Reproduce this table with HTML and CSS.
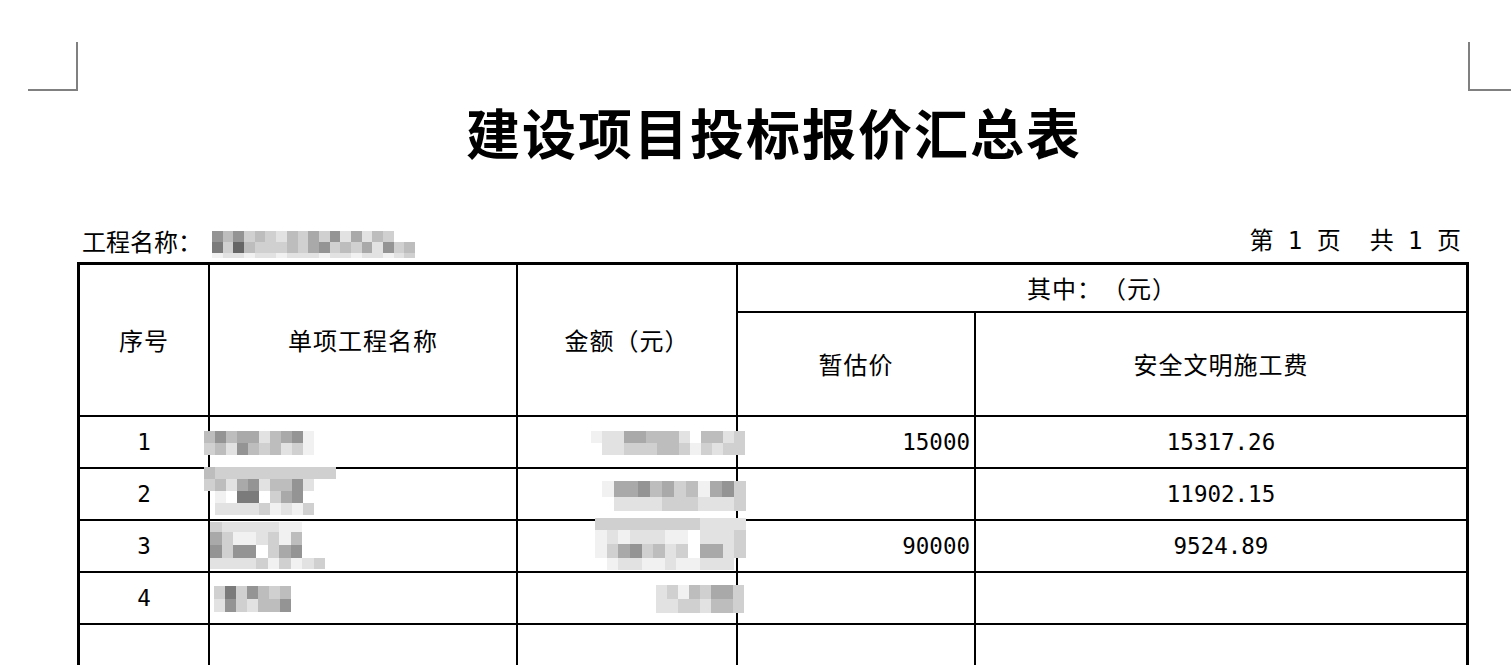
FILE: index.html
```html
<!DOCTYPE html>
<html lang="zh-CN">
<head>
<meta charset="utf-8">
<title>建设项目投标报价汇总表</title>
<link rel="stylesheet" href="styles.css">
</head>
<body>
<div class="page">
  <div class="marks">
    <div class="mark mark-l"></div>
    <div class="mark mark-r"></div>
  </div>
  <div class="doc">
    <h1 class="title">建设项目投标报价汇总表</h1>
    <div class="info">
      <div class="proj"><span class="lbl">工程名称：</span><span class="blur b-proj"><i class="k6"></i><i class="k4"></i><i class="k6"></i><i class="k3"></i><i class="k4"></i><i class="k3"></i><i class="k2"></i><i class="k4"></i><i class="k3"></i><i class="k5"></i><i class="k3"></i><i class="k6"></i><i class="k2"></i><i class="k5"></i><i class="k2"></i><i class="k4"></i><i class="k3"></i><i class="k0"></i><i class="k0"></i><i class="k7"></i><i class="k3"></i><i class="k8"></i><i class="k4"></i><i class="k3"></i><i class="k3"></i><i class="k3"></i><i class="k4"></i><i class="k3"></i><i class="k5"></i><i class="k6"></i><i class="k3"></i><i class="k4"></i><i class="k3"></i><i class="k5"></i><i class="k2"></i><i class="k6"></i><i class="k3"></i><i class="k4"></i><i class="k1"></i><i class="k2"></i><i class="k2"></i><i class="k1"></i><i class="k2"></i><i class="k2"></i><i class="k1"></i><i class="k2"></i><i class="k2"></i><i class="k2"></i><i class="k1"></i><i class="k2"></i><i class="k2"></i><i class="k1"></i><i class="k2"></i><i class="k2"></i><i class="k1"></i><i class="k2"></i><i class="k3"></i></span></div>
      <div class="pages">第 1 页  共 1 页</div>
    </div>
    <table class="sheet">
      <colgroup>
        <col class="c1"><col class="c2"><col class="c3"><col class="c4"><col class="c5">
      </colgroup>
      <tr class="hr1">
        <th rowspan="2">序号</th>
        <th rowspan="2">单项工程名称</th>
        <th rowspan="2">金额（元）</th>
        <th colspan="2" class="last">其中：（元）</th>
      </tr>
      <tr class="hr2">
        <th>暂估价</th>
        <th class="last">安全文明施工费</th>
      </tr>
      <tr class="dr">
        <td class="no">1</td>
        <td class="name"><span class="blur b-n1"><i class="k4"></i><i class="k6"></i><i class="k4"></i><i class="k5"></i><i class="k5"></i><i class="k2"></i><i class="k4"></i><i class="k5"></i><i class="k6"></i><i class="k1"></i><i class="k3"></i><i class="k4"></i><i class="k2"></i><i class="k6"></i><i class="k4"></i><i class="k3"></i><i class="k4"></i><i class="k2"></i><i class="k3"></i><i class="k1"></i></span></td>
        <td class="amt"><span class="blur b-a1"><i class="k1"></i><i class="k2"></i><i class="k2"></i><i class="k5"></i><i class="k5"></i><i class="k4"></i><i class="k4"></i><i class="k4"></i><i class="k2"></i><i class="k0"></i><i class="k4"></i><i class="k4"></i><i class="k2"></i><i class="k3"></i><i class="k0"></i><i class="k2"></i><i class="k2"></i><i class="k3"></i><i class="k3"></i><i class="k3"></i><i class="k4"></i><i class="k4"></i><i class="k3"></i><i class="k1"></i><i class="k3"></i><i class="k2"></i><i class="k3"></i><i class="k3"></i></span></td>
        <td class="est">15000</td>
        <td class="fee last">15317.26</td>
      </tr>
      <tr class="dr">
        <td class="no">2</td>
        <td class="name"><span class="blur b-n2"><i class="k4"></i><i class="k3"></i><i class="k3"></i><i class="k3"></i><i class="k3"></i><i class="k3"></i><i class="k3"></i><i class="k3"></i><i class="k3"></i><i class="k3"></i><i class="k3"></i><i class="k3"></i><i class="k3"></i><i class="k4"></i><i class="k2"></i><i class="k5"></i><i class="k6"></i><i class="k2"></i><i class="k4"></i><i class="k4"></i><i class="k6"></i><i class="k2"></i><i class="k0"></i><i class="k0"></i><i class="k0"></i><i class="k1"></i><i class="k0"></i><i class="k7"></i><i class="k7"></i><i class="k0"></i><i class="k3"></i><i class="k5"></i><i class="k6"></i><i class="k0"></i><i class="k0"></i><i class="k0"></i><i class="k0"></i><i class="k2"></i><i class="k2"></i><i class="k2"></i><i class="k2"></i><i class="k3"></i><i class="k1"></i><i class="k2"></i><i class="k1"></i><i class="k3"></i><i class="k0"></i><i class="k0"></i></span></td>
        <td class="amt"><span class="blur b-a2"><i class="k1"></i><i class="k5"></i><i class="k5"></i><i class="k6"></i><i class="k4"></i><i class="k5"></i><i class="k3"></i><i class="k4"></i><i class="k1"></i><i class="k5"></i><i class="k6"></i><i class="k3"></i><i class="k0"></i><i class="k2"></i><i class="k2"></i><i class="k2"></i><i class="k2"></i><i class="k3"></i><i class="k3"></i><i class="k3"></i><i class="k2"></i><i class="k2"></i><i class="k2"></i><i class="k3"></i></span></td>
        <td class="est"></td>
        <td class="fee last">11902.15</td>
      </tr>
      <tr class="dr">
        <td class="no">3</td>
        <td class="name"><span class="blur b-n3"><i class="k3"></i><i class="k2"></i><i class="k2"></i><i class="k2"></i><i class="k2"></i><i class="k2"></i><i class="k1"></i><i class="k1"></i><i class="k0"></i><i class="k0"></i><i class="k5"></i><i class="k3"></i><i class="k1"></i><i class="k1"></i><i class="k2"></i><i class="k3"></i><i class="k1"></i><i class="k4"></i><i class="k0"></i><i class="k0"></i><i class="k6"></i><i class="k3"></i><i class="k6"></i><i class="k6"></i><i class="k0"></i><i class="k3"></i><i class="k5"></i><i class="k6"></i><i class="k0"></i><i class="k0"></i><i class="k2"></i><i class="k2"></i><i class="k2"></i><i class="k2"></i><i class="k3"></i><i class="k1"></i><i class="k3"></i><i class="k1"></i><i class="k2"></i><i class="k3"></i></span></td>
        <td class="amt"><span class="blur b-a3"><i class="k3"></i><i class="k3"></i><i class="k3"></i><i class="k3"></i><i class="k3"></i><i class="k3"></i><i class="k3"></i><i class="k3"></i><i class="k3"></i><i class="k2"></i><i class="k2"></i><i class="k2"></i><i class="k2"></i><i class="k1"></i><i class="k2"></i><i class="k1"></i><i class="k2"></i><i class="k2"></i><i class="k2"></i><i class="k1"></i><i class="k1"></i><i class="k0"></i><i class="k2"></i><i class="k2"></i><i class="k2"></i><i class="k3"></i><i class="k1"></i><i class="k3"></i><i class="k5"></i><i class="k6"></i><i class="k3"></i><i class="k4"></i><i class="k2"></i><i class="k3"></i><i class="k0"></i><i class="k5"></i><i class="k5"></i><i class="k2"></i><i class="k3"></i><i class="k0"></i><i class="k1"></i><i class="k2"></i><i class="k2"></i><i class="k1"></i><i class="k1"></i><i class="k2"></i><i class="k1"></i><i class="k1"></i><i class="k2"></i><i class="k2"></i><i class="k2"></i><i class="k0"></i></span></td>
        <td class="est">90000</td>
        <td class="fee last">9524.89</td>
      </tr>
      <tr class="dr">
        <td class="no">4</td>
        <td class="name"><span class="blur b-n4"><i class="k3"></i><i class="k7"></i><i class="k3"></i><i class="k6"></i><i class="k4"></i><i class="k3"></i><i class="k4"></i><i class="k2"></i><i class="k6"></i><i class="k3"></i><i class="k2"></i><i class="k4"></i><i class="k4"></i><i class="k6"></i></span></td>
        <td class="amt"><span class="blur b-a4"><i class="k0"></i><i class="k2"></i><i class="k3"></i><i class="k1"></i><i class="k4"></i><i class="k3"></i><i class="k5"></i><i class="k5"></i><i class="k3"></i><i class="k0"></i><i class="k2"></i><i class="k2"></i><i class="k3"></i><i class="k3"></i><i class="k2"></i><i class="k4"></i><i class="k4"></i><i class="k3"></i></span></td>
        <td class="est"></td>
        <td class="fee last"></td>
      </tr>
      <tr class="dr">
        <td class="no"></td>
        <td class="name"></td>
        <td class="amt"></td>
        <td class="est"></td>
        <td class="fee last"></td>
      </tr>
    </table>
  </div>
</div>
</body>
</html>
```

FILE: styles.css
```css
html, body {
  margin: 0;
  padding: 0;
  background: #ffffff;
}

body {
  font-family: "DejaVu Sans Mono", "Noto Sans CJK SC", monospace;
  color: #000;
  overflow: hidden;
  text-spacing-trim: space-all;
}

.page {
  padding-top: 42px;
}

.marks {
  display: flex;
  justify-content: space-between;
  padding-left: 28px;
}

.mark {
  height: 47px;
  border-bottom: 2px solid #808080;
}

.mark-l {
  width: 48px;
  border-right: 2px solid #808080;
}

.mark-r {
  width: 41px;
  border-left: 2px solid #808080;
}

.doc {
  width: 1392px;
  margin-left: 77px;
}

.title {
  margin: 9px 0 0 0;
  font-family: "Noto Sans CJK SC", sans-serif;
  font-weight: 700;
  font-size: 54px;
  line-height: 64px;
  letter-spacing: 2px;
  padding-left: 2px;
  text-align: center;
}

.info {
  margin-top: 62px;
  height: 36px;
  display: flex;
  justify-content: space-between;
  align-items: flex-start;
  font-size: 24px;
  line-height: 30px;
  padding: 0 8px 0 5px;
}

.proj {
  display: flex;
  align-items: flex-start;
}

.lbl {
  font-family: "Noto Sans CJK SC", sans-serif;
}

.pages {
  white-space: pre;
}

/* pixelated blur blocks */
.blur {
  display: inline-grid;
  vertical-align: middle;
  line-height: 0;
}

.blur i {
  display: block;
}

.k0 { background: transparent; }
.k1 { background: #f1f1f1; }
.k2 { background: #e2e2e2; }
.k3 { background: #d0d0d0; }
.k4 { background: #bdbdbd; }
.k5 { background: #a9a9a9; }
.k6 { background: #949494; }
.k7 { background: #7b7b7b; }
.k8 { background: #666666; }

.b-proj {
  margin: 5px 0 0 10px;
  grid-template-columns: repeat(19, 10.7px);
  grid-template-rows: 11px 11px 5px;
}

.b-n1 {
  margin-left: -6px;
  grid-template-columns: repeat(10, 11px);
  grid-template-rows: 12px 12px;
}

.b-n2 {
  margin: -6px 0 0 -6px;
  grid-template-columns: repeat(12, 11px);
  grid-template-rows: 12px 12px 12px 12px;
}

.b-n3 {
  margin: -2px 0 0 0;
  grid-template-columns: repeat(10, 11.5px);
  grid-template-rows: 10px 13px 13px 11px;
}

.b-n4 {
  margin-left: 4px;
  grid-template-columns: repeat(7, 11px);
  grid-template-rows: 13px 13px;
}

.b-a1 {
  margin-right: -9px;
  grid-template-columns: repeat(14, 11px);
  grid-template-rows: 12px 12px;
}

.b-a2 {
  margin: 4px -10px 0 0;
  grid-template-columns: repeat(12, 12px);
  grid-template-rows: 16px 14px;
}

.b-a3 {
  margin: -10px -10px -6px 0;
  grid-template-columns: repeat(13, 11.6px);
  grid-template-rows: 12px 14px 14px 12px;
}

.b-a4 {
  margin: 2px -8px 0 0;
  grid-template-columns: repeat(9, 11px);
  grid-template-rows: 14px 14px;
}

/* table */
.sheet {
  width: 1392px;
  table-layout: fixed;
  border-collapse: separate;
  border-spacing: 0;
  border: 3px solid #000;
  box-sizing: border-box;
}

.c1 { width: 130px; }
.c2 { width: 308px; }
.c3 { width: 220px; }
.c4 { width: 238px; }
.c5 { width: 490px; }

.sheet th,
.sheet td {
  box-sizing: border-box;
  padding: 0;
  border-right: 2px solid #000;
  border-bottom: 2px solid #000;
  vertical-align: middle;
  white-space: nowrap;
  overflow: visible;
}

.sheet .last {
  border-right: none;
}

.sheet th {
  font-family: "Noto Sans CJK SC", sans-serif;
  font-weight: 400;
  font-size: 24px;
  letter-spacing: 1px;
  line-height: 30px;
  text-align: center;
}

.hr1 { height: 48px; }
.hr2 { height: 104px; }
.dr { height: 52px; }

.sheet td {
  font-size: 22.5px;
  line-height: 26px;
}

.no { text-align: center; }
.name { text-align: left; }
.amt { text-align: right; }
.est { text-align: right; padding-right: 4px !important; }
.fee { text-align: center; }
```
